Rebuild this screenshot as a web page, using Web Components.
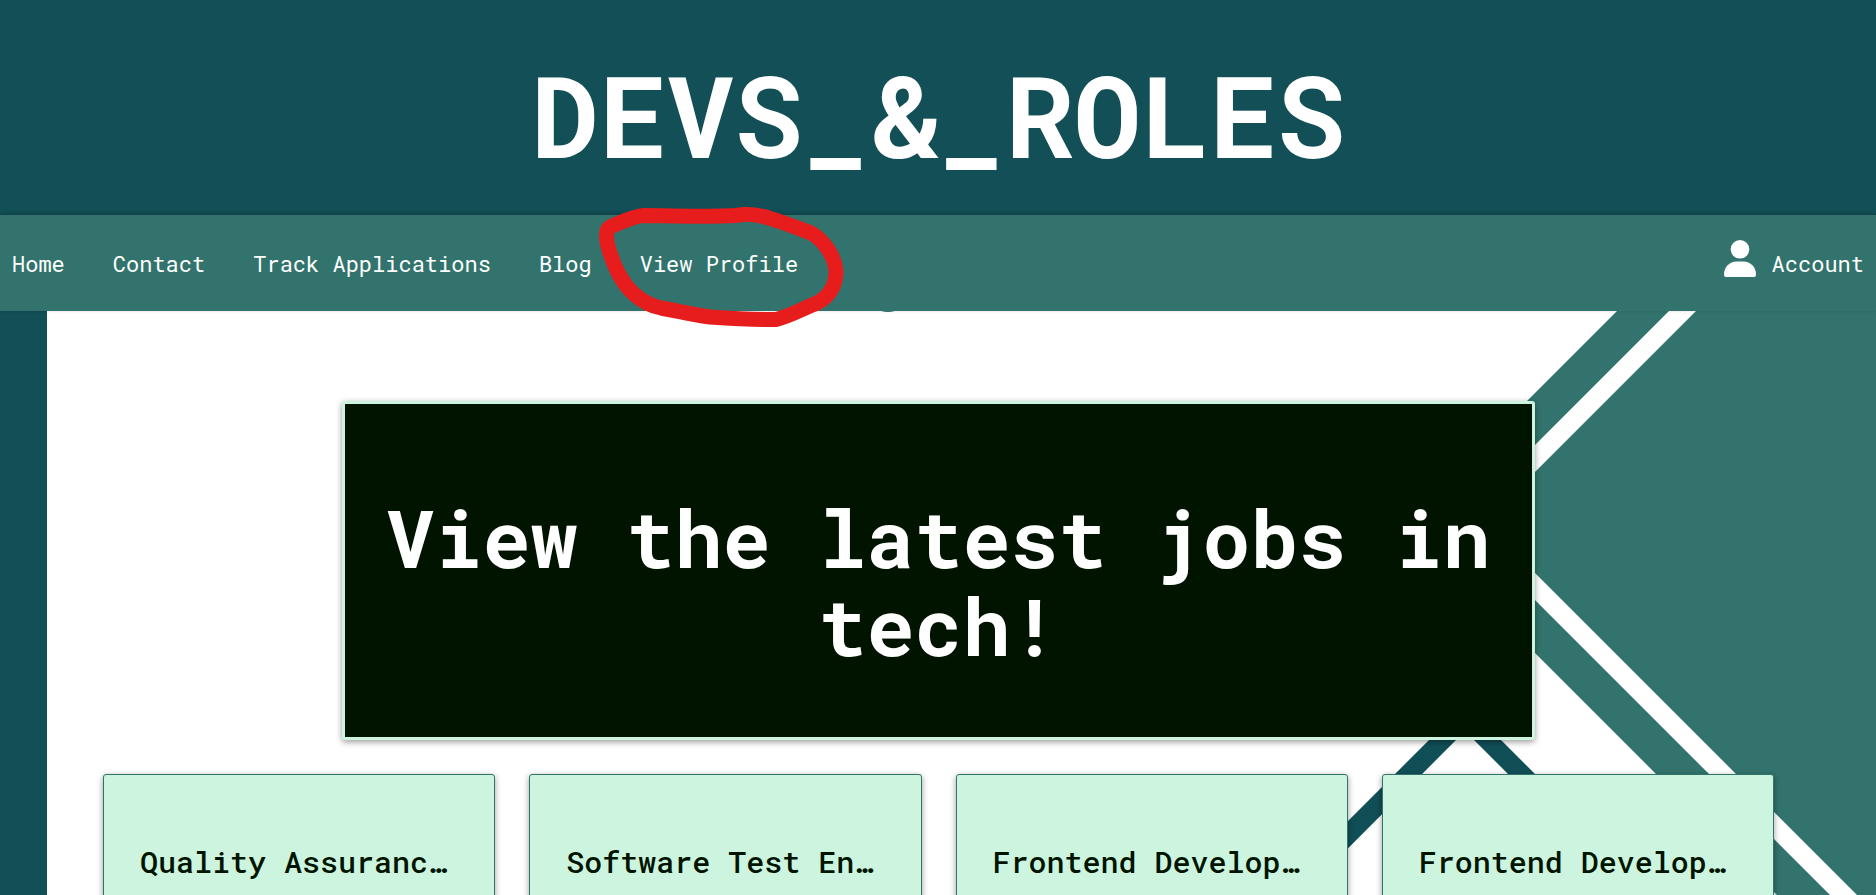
<!DOCTYPE html>
<html lang="en">
<head>
<meta charset="utf-8">
<title>Devs_&amp;_Roles</title>
<style>
  body {
    margin: 0;
    font-family: "Roboto Mono", "DejaVu Sans Mono", monospace;
    --deep: #124f56;
    --teal: #32746d;
    --mint: #cdf4de;
    --ink: #001400;
  }
</style>
</head>
<body>
<dr-app></dr-app>
<script>
const define = (name, html) => {
  customElements.define(name, class extends HTMLElement {
    constructor() {
      super();
      this.attachShadow({ mode: "open" }).innerHTML = html;
    }
  });
};

define("dr-banner", `
  <style>
    :host { display: block; background: var(--deep); color: #fff; padding: 49px 16px 34px; }
    h1 { margin: 0; font-size: 113px; line-height: 132px; font-weight: 700; text-align: center; }
  </style>
  <h1><slot></slot></h1>`);

customElements.define("dr-link", class extends HTMLElement {
  constructor() {
    super();
    this.attachShadow({ mode: "open" }).innerHTML = `
      <style>
        :host { display: block; }
        a { display: flex; align-items: center; gap: 16px; color: #fff; text-decoration: none; white-space: nowrap; }
      </style>
      <a href="${this.getAttribute("href")}"><slot name="icon"></slot><span><slot></slot></span></a>`;
  }
});

define("dr-user-icon", `
  <style>
    :host { display: block; padding-bottom: 12px; }
    svg { display: block; }
  </style>
  <svg width="32" height="37" viewBox="0 0 32 37" fill="#fff" aria-hidden="true">
    <circle cx="16" cy="9.3" r="9.3"/>
    <path d="M0 34.500C0 27 5.500 21.500 12.500 21.500H19.500C26.500 21.500 32 27 32 34.500Q32 37 30 37H2Q0 37 0 34.500Z"/>
  </svg>`);

/* Hand-drawn ring that calls out a navigation entry. */
define("dr-marker", `
  <style>
    :host { position: relative; display: block; }
    svg { position: absolute; left: -42px; top: -44px; overflow: visible; pointer-events: none; z-index: 2; }
  </style>
  <slot></slot>
  <svg width="246" height="122" viewBox="598 206 246 122" fill="none" stroke="#e71d1d" stroke-width="15" stroke-linejoin="round" aria-hidden="true">
    <path d="M736 216.500C702 218.500 674 216.500 644 216.500C634 217 624 222 612 227C606 230 606.500 233 606.500 238C606.500 247 611 256 614 265C619 277 626 288 634 295C642 302 651 307 661 309C678 312 694 316 710 318C730 319.500 754 321 776 320.500C790 317 802 310 817 304C832 296 836 284 836 272C835 258 824 241 811 234C789 226 762 214 744 215.500L735 216.500"/>
  </svg>`);

define("dr-nav", `
  <style>
    :host { display: block; background: var(--teal); position: relative; z-index: 1; box-shadow: 0 -1px 4px rgba(0, 0, 0, .25); }
    nav { display: flex; justify-content: space-between; align-items: center; box-sizing: border-box; min-height: 96px; padding: 2px 12px 0; font-size: 22px; line-height: 30px; }
    ul { display: flex; gap: 48px; margin: 0; padding: 0; list-style: none; }
  </style>
  <nav>
    <ul>
      <li><dr-link href="#home">Home</dr-link></li>
      <li><dr-link href="#contact">Contact</dr-link></li>
      <li><dr-link href="#track">Track Applications</dr-link></li>
      <li><dr-link href="#blog">Blog</dr-link></li>
      <li><dr-marker><dr-link href="#profile">View Profile</dr-link></dr-marker></li>
    </ul>
    <dr-link href="#account"><dr-user-icon slot="icon"></dr-user-icon>Account</dr-link>
  </nav>`);

define("dr-backdrop", `
  <style>
    :host { position: absolute; inset: 0; z-index: 0; background: #fff; }
    svg { display: block; width: 100%; height: 100%; }
  </style>
  <svg viewBox="0 311 1876 584" preserveAspectRatio="xMidYMin slice" aria-hidden="true">
    <rect x="0" y="311" width="47" height="600" fill="#124f56"/>
    <path fill="#32746d" d="M1617 311H1669L1457.500 522.500L1843 908H1790L1405 523Z"/>
    <path fill="#32746d" d="M1696 311H1876V908H1870L1484.500 522.500Z"/>
    <path fill="#114f57" d="M1465 704L1261 908H1288.500L1465 731L1642 908H1669Z"/>
    <path fill="#32746d" d="M881 311H895Q888 313 881 311Z"/>
  </svg>`);

define("dr-hero", `
  <style>
    :host {
      display: block; box-sizing: border-box; width: min(100%, 1193px); margin: 0 auto;
      border: 3px solid var(--mint); border-radius: 3px; background: var(--ink); color: #fff;
      padding: 89px 32px 68px; box-shadow: 0 2px 6px rgba(0, 0, 0, .4);
    }
    h2 { margin: 0; font-size: 80px; line-height: 88px; font-weight: 700; text-align: center; }
  </style>
  <h2><slot></slot></h2>`);

define("dr-card", `
  <style>
    :host {
      display: block; min-width: 0; min-height: 200px; box-sizing: border-box;
      border: 1px solid var(--teal); border-radius: 3px; background: var(--mint); color: var(--ink);
      padding: 67px 32px; box-shadow: 0 2px 6px rgba(0, 0, 0, .4);
    }
    h3 { margin: 0; font-size: 30px; line-height: 40px; font-weight: 500; padding-left: 4px; white-space: nowrap; overflow: hidden; text-overflow: ellipsis; }
  </style>
  <h3><slot></slot></h3>`);

define("dr-app", `
  <style>
    :host { display: flex; flex-direction: column; height: 100vh; overflow: hidden; }
    main { position: relative; flex: 1; min-height: 0; }
    .content { position: relative; padding: 90px 102px 0 103px; }
    .jobs { display: grid; grid-template-columns: repeat(4, 1fr); gap: 34px; margin-top: 34px; }
  </style>
  <dr-banner>DEVS_&amp;_ROLES</dr-banner>
  <dr-nav></dr-nav>
  <main>
    <dr-backdrop></dr-backdrop>
    <div class="content">
      <dr-hero>View the latest jobs in tech!</dr-hero>
      <div class="jobs">
        <dr-card>Quality Assuranc…</dr-card>
        <dr-card>Software Test En…</dr-card>
        <dr-card>Frontend Develop…</dr-card>
        <dr-card>Frontend Develop…</dr-card>
      </div>
    </div>
  </main>`);
</script>
</body>
</html>
